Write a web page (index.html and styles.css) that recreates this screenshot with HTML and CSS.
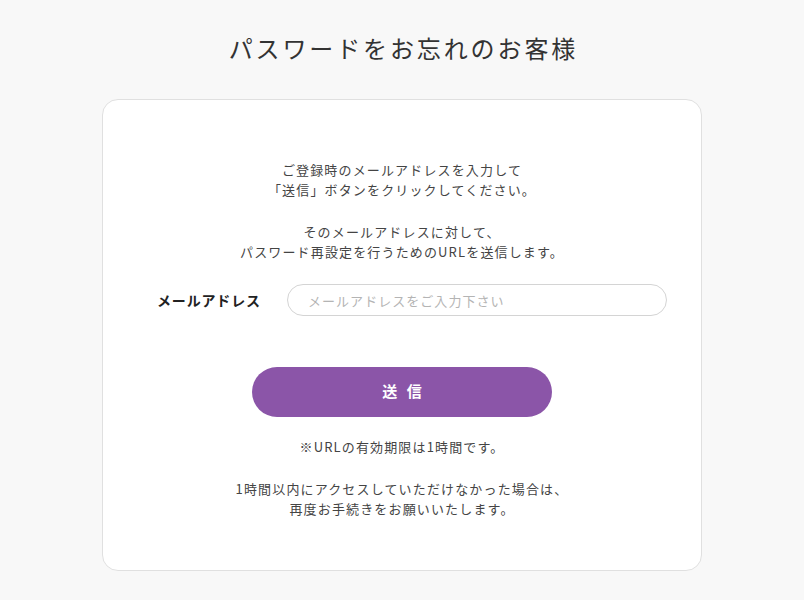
FILE: index.html
```html
<!DOCTYPE html>
<html lang="ja">
<head>
<meta charset="utf-8">
<title>パスワードをお忘れのお客様</title>
<link rel="stylesheet" href="styles.css">
</head>
<body>
<main class="page">
  <h1 class="title">パスワードをお忘れのお客様</h1>
  <section class="card">
    <p class="lead">ご登録時のメールアドレスを入力して<br>「送信」ボタンをクリックしてください。</p>
    <p class="lead">そのメールアドレスに対して、<br>パスワード再設定を行うためのURLを送信します。</p>
    <form class="form" onsubmit="return false;">
      <div class="row">
        <label class="label" for="email">メールアドレス</label>
        <input class="input" id="email" type="email" placeholder="メールアドレスをご入力下さい">
      </div>
      <button class="submit" type="submit">送 信</button>
    </form>
    <p class="note">※URLの有効期限は1時間です。</p>
    <p class="note">1時間以内にアクセスしていただけなかった場合は、<br>再度お手続きをお願いいたします。</p>
  </section>
</main>
</body>
</html>
```
FILE: styles.css
```css
* { box-sizing: border-box; }
html, body {
  margin: 0;
  padding: 0;
  background: #f8f8f8;
  color: #333;
  font-family: "Noto Sans CJK JP", "Noto Sans", sans-serif;
}
.page {
  padding-top: 30px;
}
.title {
  margin: 0;
  text-align: center;
  font-size: 24px;
  font-weight: 400;
  letter-spacing: 0.12em;
  line-height: 36px;
  padding-left: 0.12em;
  color: #333;
}
.card {
  width: 600px;
  margin: 33px auto 0;
  background: #fff;
  border: 1px solid #e0e0e0;
  border-radius: 16px;
  padding: 60px 0 51px;
}
.lead, .note {
  margin: 0;
  text-align: center;
  font-size: 13px;
  line-height: 20px;
  letter-spacing: 1.15px;
  color: #444;
}
.lead + .lead { margin-top: 22px; }
.note + .note { margin-top: 22px; }
.form {
  margin-top: 22px;
}
.row {
  display: flex;
  align-items: center;
  padding: 0 34px 0 54px;
}
.label {
  width: 130px;
  font-size: 14px;
  font-weight: 700;
  letter-spacing: 0.06em;
  color: #222;
}
.input {
  flex: 1;
  height: 32px;
  border: 1px solid #d4d4d4;
  border-radius: 16px;
  padding: 0 20px;
  font-family: inherit;
  font-size: 13px;
  letter-spacing: 0.08em;
  color: #333;
  outline: none;
  background: #fff;
}
.input::placeholder { color: #b4b4b4; }
.submit {
  display: block;
  width: 300px;
  height: 50px;
  margin: 51px auto 20px;
  border: none;
  border-radius: 25px;
  background: #8b55a8;
  color: #fff;
  font-family: inherit;
  font-size: 15px;
  font-weight: 700;
  letter-spacing: 0.2em;
  padding: 0 0 4px 0.2em;
  cursor: pointer;
}
```
